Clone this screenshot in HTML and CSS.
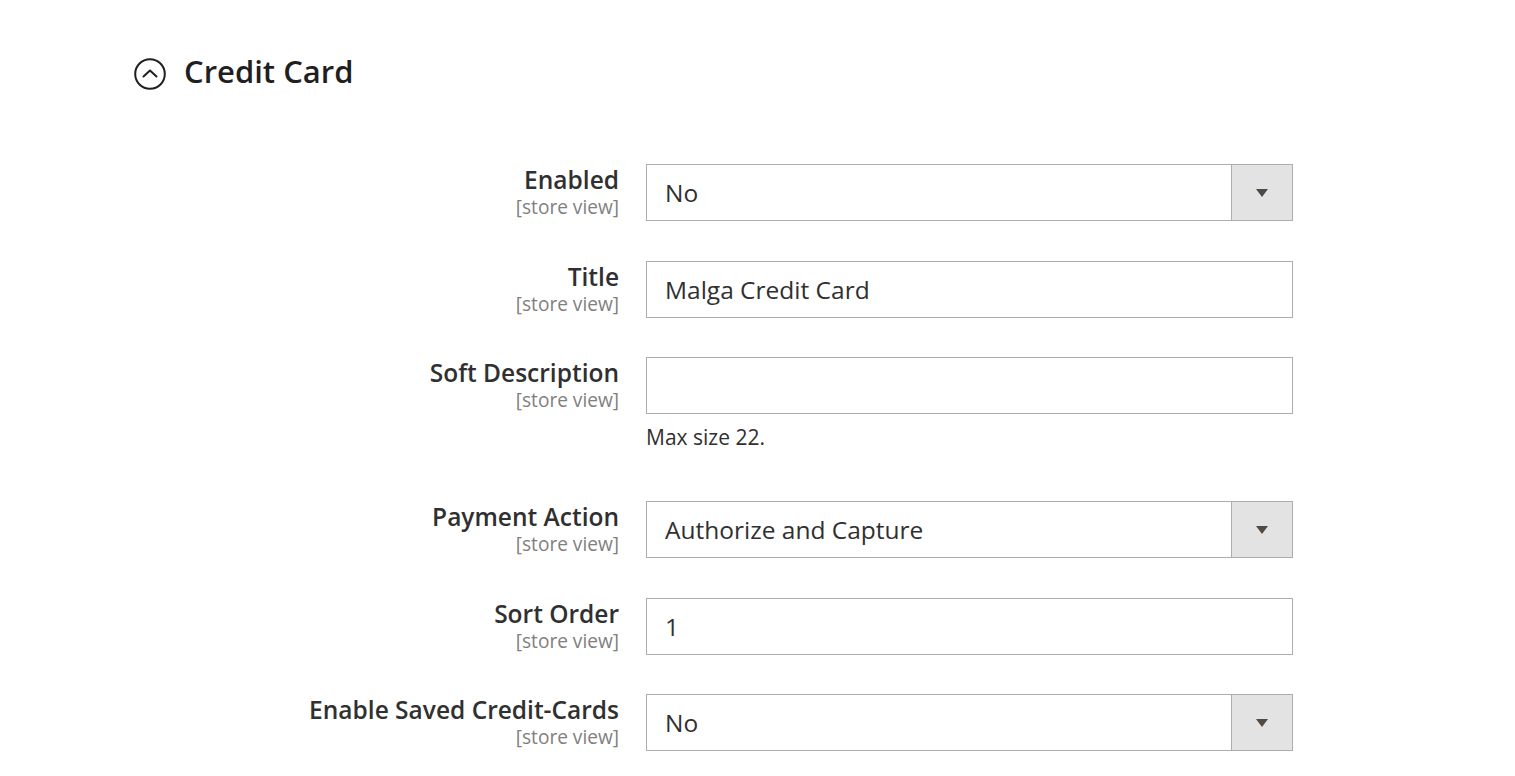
FILE: index.html
```html
<!DOCTYPE html>
<html lang="en">
<head>
<meta charset="utf-8">
<title>Credit Card</title>
<link rel="stylesheet" href="styles.css">
</head>
<body>
<section class="section">
  <header class="section-head">
    <svg class="toggle-icon" width="32" height="32" viewBox="0 0 32 32" aria-hidden="true">
      <circle cx="16" cy="16" r="14.8" fill="none" stroke="#1f1f1f" stroke-width="2"/>
      <path d="M9.5 18.5 L16 12.5 L22.5 18.5" fill="none" stroke="#1f1f1f" stroke-width="2" stroke-linecap="round" stroke-linejoin="round"/>
    </svg>
    <h2 class="section-title">Credit Card</h2>
  </header>

  <div class="form">
    <div class="row">
      <div class="label"><span class="label-text">Enabled</span><span class="scope">[store view]</span></div>
      <div class="field">
        <div class="select"><span class="select-value">No</span><span class="select-arrow"></span></div>
      </div>
    </div>

    <div class="row">
      <div class="label"><span class="label-text">Title</span><span class="scope">[store view]</span></div>
      <div class="field">
        <input class="text-input" type="text" value="Malga Credit Card">
      </div>
    </div>

    <div class="row">
      <div class="label"><span class="label-text">Soft Description</span><span class="scope">[store view]</span></div>
      <div class="field">
        <input class="text-input" type="text" value="">
        <p class="note">Max size 22.</p>
      </div>
    </div>

    <div class="row">
      <div class="label"><span class="label-text">Payment Action</span><span class="scope">[store view]</span></div>
      <div class="field">
        <div class="select"><span class="select-value">Authorize and Capture</span><span class="select-arrow"></span></div>
      </div>
    </div>

    <div class="row">
      <div class="label"><span class="label-text">Sort Order</span><span class="scope">[store view]</span></div>
      <div class="field">
        <input class="text-input" type="text" value="1">
      </div>
    </div>

    <div class="row">
      <div class="label"><span class="label-text">Enable Saved Credit-Cards</span><span class="scope">[store view]</span></div>
      <div class="field">
        <div class="select"><span class="select-value">No</span><span class="select-arrow"></span></div>
      </div>
    </div>
  </div>
</section>
</body>
</html>
```

FILE: styles.css
```css
html, body {
  margin: 0;
  padding: 0;
  background: #ffffff;
}

body {
  font-family: "Open Sans", "Noto Sans", "Liberation Sans", sans-serif;
  color: #303030;
}

.section {
  display: flex;
  flex-direction: column;
}

.section-head {
  display: flex;
  align-items: flex-start;
  gap: 18px;
  margin-top: 52px;
  padding-left: 134px;
}

.toggle-icon {
  display: block;
  margin-top: 6px;
  flex: none;
}

.section-title {
  margin: 0;
  font-size: 31px;
  line-height: 38px;
  font-weight: 600;
  color: #1f1f1f;
}

.form {
  display: flex;
  flex-direction: column;
  gap: 39.5px;
  margin-top: 74px;
}

.row {
  display: flex;
  align-items: flex-start;
  gap: 27px;
}

.label {
  width: 619px;
  flex: none;
  display: flex;
  flex-direction: column;
  align-items: flex-end;
  padding-top: 2px;
  text-align: right;
}

.label-text {
  font-size: 24.5px;
  line-height: 28px;
  font-weight: 600;
  color: #303030;
}

.scope {
  font-size: 19.1px;
  line-height: 26px;
  color: #808080;
}

.field {
  width: 647px;
  flex: none;
  display: flex;
  flex-direction: column;
}

.text-input,
.select {
  box-sizing: border-box;
  width: 647px;
  height: 57px;
  border: 1px solid #adadad;
  background: #ffffff;
  margin: 0;
  font-family: inherit;
  font-size: 24.5px;
  color: #303030;
}

.text-input {
  display: block;
  padding: 0 18px;
  outline: none;
}

.select {
  display: flex;
  align-items: stretch;
}

.select-value {
  flex: 1;
  display: flex;
  align-items: center;
  padding-left: 18px;
}

.select-arrow {
  width: 60px;
  flex: none;
  background: #e3e3e3;
  border-left: 1px solid #adadad;
  display: flex;
  align-items: center;
  justify-content: center;
}

.select-arrow::after {
  content: "";
  display: block;
  width: 0;
  height: 0;
  border-left: 6.5px solid transparent;
  border-right: 6.5px solid transparent;
  border-top: 8px solid #514943;
}

.note {
  margin: 8.5px 0 10px;
  font-size: 21px;
  line-height: 29px;
  color: #303030;
}
```
